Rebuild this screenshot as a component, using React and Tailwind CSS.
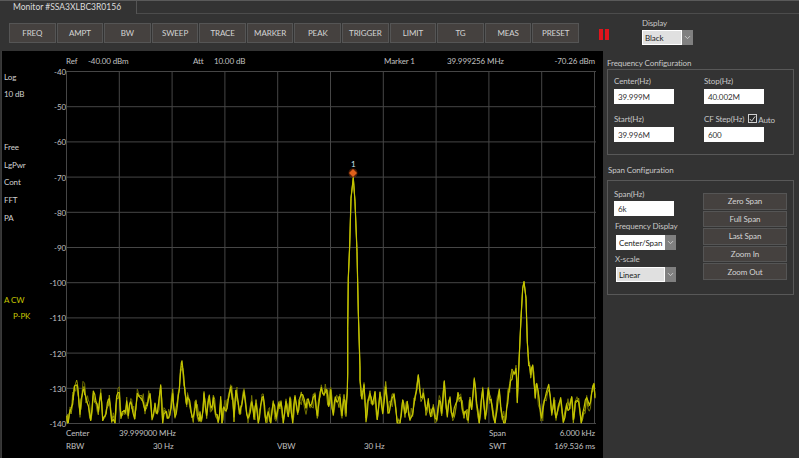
import React from "react";
import { ChevronDown } from "lucide-react";

const segs = [
  [60, 355, [20,190,25,205,30,165,36,155,40,125,44,90,50,85,55,115,60,175,66,120,72,95,76,125,80,130,85,150,92,190,100,110,108,135,115,175,122,115,128,190,135,180,142,150,148,130,155,200,165,205,170,125,178,110,183,190,190,170,196,175,200,140,205,180,212,135,218,165,224,190,232,115,245,125,255,165,262,150,270,120,276,190,285,150,292,180,302,95,308,200,316,170,322,190,330,180,338,110,345,180,352,150,358,110,364,30,368,35,375,110,380,145,385,125,392,160,400,190,408,145,416,190]],
  [200, 355, [0,180,6,190,12,115,20,185,28,125,34,165,40,125,48,180,55,205,62,130,66,200,72,150,78,160,85,130,92,100,98,125,102,190,108,100,114,140,120,175,125,150,132,115,140,170,148,180,155,135,162,190,168,145,175,200,182,150,190,125,197,195,205,170,212,200,220,140,228,195,236,150,243,145,250,205,258,145,265,180,270,125,278,205,285,118,293,170,300,135,308,125,318,165,325,130,335,150,345,125,352,185,358,130,364,95,372,120,380,110,386,150,392,110,400,180,406,130,414,145]],
  [340, 355, [0,130,6,180,12,125,18,175,22,110,23,60]],
  [335, 165, [38,490,40,340,44,240,48,100,55,38,60,110,66,260,70,440,75,610]],
  [340, 355, [60,80,65,125,72,85,78,195,85,130,90,115,97,150,105,110,112,190,120,110,128,170,137,90,144,175,152,140,162,125,172,205,180,205,188,130,195,180,202,145,210,190,218,175,225,125,235,60,243,130,250,115,258,170,265,135,272,180,280,155,290,200,298,130,305,180,313,85,322,180,330,130,338,185,348,150,354,120,362,125,372,185,378,165,385,195]],
  [470, 275, [0,370,5,400,13,318,20,385,28,445,38,345,46,430,55,345,63,380,75,445,88,340,97,430,105,445,110,400,116,350,122,310,130,295,138,285,142,375,148,240,153,130,158,40,162,20,168,70,172,200,176,265,182,305,188,265,196,360,200,330,210,400,215,435,222,385,236,335,245,420,252,375,258,425,272,365,280,440,290,385,298,400,305,360,310,440,316,378,326,380,334,445,342,405,350,370,358,395,365,360,372,335,375,365]],
];

const base = [];
segs.forEach(([ox, oy, a]) => {
  for (let i = 0; i < a.length; i += 2) base.push([ox + a[i] / 3 - 66, oy + a[i + 1] / 3 - 71]);
});
const toStr = (l) => l.map(([x, y]) => `${x.toFixed(1)},${y.toFixed(1)}`).join(" ");
let seed = 7;
const rnd = () => ((seed = (seed * 16807) % 2147483647) / 2147483647);
const clampY = (y) => Math.min(352, y);
// thicken the noise floor: insert jittered midpoints between the traced points
const dense = (amp) => {
  const out = [];
  base.forEach((p, i) => {
    const n = base[i + 1];
    out.push([p[0], clampY(p[1] + (p[1] > 290 ? (rnd() - 0.5) * amp * 0.5 : 0))]);
    if (n && p[1] > 285 && n[1] > 285 && n[0] - p[0] > 1) {
      out.push([(p[0] + n[0]) / 2, clampY((p[1] + n[1]) / 2 + (rnd() - 0.5) * amp)]);
    }
  });
  return out;
};
const lineA = dense(10);
const lineB = dense(14);
const lineC = dense(20);

const menu = ["FREQ", "AMPT", "BW", "SWEEP", "TRACE", "MARKER", "PEAK", "TRIGGER", "LIMIT", "TG", "MEAS", "PRESET"];
const levels = ["-40", "-50", "-60", "-70", "-80", "-90", "-100", "-110", "-120", "-130", "-140"];
const font = { fontFamily: 'Lato, "Liberation Sans", Arial, sans-serif' };

function Btn({ children, className = "" }) {
  return (
    <div className={`flex items-center justify-center bg-[#45413f] border border-[#555555] text-[#d4d4d4] ${className}`}>
      {children}
    </div>
  );
}
function Field({ label, value, extra }) {
  return (
    <div className="flex flex-col">
      <div className="h-[16px] flex items-center gap-[4px] text-[#c8c8c8] whitespace-nowrap">
        <span>{label}</span>
        {extra}
      </div>
      <div className="w-[60px] h-[15px] bg-white text-[#333] pl-[4px] flex items-center">{value}</div>
    </div>
  );
}
function Dropdown({ value, width = "w-[60px]", sel = "bg-white" }) {
  return (
    <div className={`${width} h-[15px] bg-white flex items-stretch text-[#222]`}>
      <div className={`flex-1 m-[1px] pl-[2px] flex items-center whitespace-nowrap overflow-hidden ${sel}`}>{value}</div>
      <div className="w-[11px] bg-[#808080] flex items-center justify-center">
        <ChevronDown size={9} color="#e0e0e0" />
      </div>
    </div>
  );
}

export default function App() {
  return (
    <div className="w-[799px] h-[458px] bg-[#333333] flex flex-col overflow-hidden text-[8px] tracking-[-0.1px] leading-none text-[#d0d0d0]" style={font}>
      {/* tab strip */}
      <div className="h-[14px] flex border-t border-[#5a5a5a]">
        <div className="w-[137px] border-r border-[#555] pl-[13px] flex items-center text-[8.5px] tracking-normal text-[#dcdcdc] whitespace-nowrap">
          Monitor #SSA3XLBC3R0156
        </div>
        <div className="flex-1 border-b border-[#4c4c4c]" />
      </div>

      {/* toolbar */}
      <div className="h-[37px] flex pl-[9px] pt-[9px]">
        <div className="w-[570px] h-[20px] grid grid-cols-12 gap-px">
          {menu.map((m) => (
            <Btn key={m}>{m}</Btn>
          ))}
        </div>
        <div className="ml-[20px] mt-[6px] h-[11px] flex gap-[2px]">
          <div className="w-[4px] bg-[#e0141c]" />
          <div className="w-[4px] bg-[#e0141c]" />
        </div>
        <div className="ml-[33px] -mt-[5px] flex flex-col gap-[3px]">
          <div className="h-[9px] flex items-center text-[#c8c8c8]">Display</div>
          <Dropdown value="Black" width="w-[51px]" sel="bg-[#e0e0e0]" />
        </div>
      </div>

      <div className="flex-1 flex min-h-0">
        {/* chart */}
        <div className="ml-px w-[602px] bg-black border-l border-[#3a3a3a] flex flex-col text-[#c0c0c0]">
          <div className="h-[20px] pl-[64px] pr-[8px] flex items-center whitespace-nowrap">
            <div className="w-[22px]">Ref</div>
            <div className="w-[105px]">-40.00 dBm</div>
            <div className="w-[21px]">Att</div>
            <div className="w-[170px]">10.00 dB</div>
            <div className="w-[63px]">Marker 1</div>
            <div>39.999256 MHz</div>
            <div className="ml-auto">-70.26 dBm</div>
          </div>

          <div className="flex h-[353px]">
            <div className="w-[43px] pl-[2px] flex flex-col -mt-[3px] text-[#d0d0d0]">
              {["Log", "10 dB", "", "", "Free", "LgPwr", "Cont", "FFT", "PA"].map((t, i) => (
                <div key={i} className="h-[17.6px] flex items-center">{t}</div>
              ))}
              <div className="mt-[65px] h-[17px] flex items-center text-[#c8c800]">A CW</div>
              <div className="h-[16px] pl-[9px] flex items-center text-[#c8c800]">P-PK</div>
            </div>
            <div className="w-[21px] -mt-[16.5px] flex flex-col items-end text-[#c0c0c0]">
              {levels.map((l) => (
                <div key={l} className="h-[35.2px] flex items-center shrink-0">{l}</div>
              ))}
            </div>
            <div className="relative w-[530px] h-[353px]">
              <svg width="530" height="353" viewBox="0 0 530 353" className="block">
                {[0,1,2,3,4,5,6,7,8,9,10].map((i) => (
                  <g key={i} stroke="#464646" strokeWidth="1">
                    <line x1={0.5 + i * 52.8} y1="0" x2={0.5 + i * 52.8} y2="353" />
                    <line x1="0" y1={0.5 + i * 35.2} x2="530" y2={0.5 + i * 35.2} />
                  </g>
                ))}
                <polyline points={toStr(lineC)} fill="none" stroke="#6f6f00" strokeWidth="1" />
                <polyline points={toStr(lineB)} fill="none" stroke="#9a9a00" strokeWidth="1" />
                <polyline points={toStr(lineA)} fill="none" stroke="#c4c400" strokeWidth="1.2" strokeLinejoin="round" />
                <circle cx="287" cy="102" r="4.5" fill="#8a3208" opacity="0.55" />
                <path d="M287 98 L291 102 L287 106 L283 102 Z" fill="#e0601a" />
              </svg>
              <div className="absolute left-[285px] top-[89px] text-[8px] text-[#cfe4f0]">1</div>
            </div>
          </div>

          <div className="pl-[64px] pt-[2px] grid grid-cols-[53px_34px_124px_87px_125px_30px_76px] auto-rows-[13px] items-center whitespace-nowrap">
            <div>Center</div>
            <div className="col-span-4">39.999000 MHz</div>
            <div>Span</div>
            <div className="text-right">6.000 kHz</div>
            <div className="col-span-2">RBW</div>
            <div>30 Hz</div>
            <div>VBW</div>
            <div>30 Hz</div>
            <div>SWT</div>
            <div className="text-right">169.536 ms</div>
          </div>
        </div>

        {/* right panel */}
        <div className="flex-1 pl-[4px] flex flex-col text-[#c8c8c8]">
          <div className="h-[18px] pt-[5px] flex items-center whitespace-nowrap">Frequency Configuration</div>
          <div className="w-[187px] h-[86px] border border-[#585858] pl-[6px] pt-[3px] grid grid-cols-[90px_auto] auto-rows-[38px]">
            <Field label="Center(Hz)" value="39.999M" />
            <Field label="Stop(Hz)" value="40.002M" />
            <Field label="Start(Hz)" value="39.996M" />
            <Field
              label="CF Step(Hz)"
              value="600"
              extra={
                <span className="flex items-center gap-[1px] -mt-[1px]">
                  <span className="w-[9px] h-[9px] border border-[#d0d0d0] bg-[#2a2a2a] flex items-center justify-center">
                    <svg width="8" height="8" viewBox="0 0 8 8"><path d="M1 4 L3 6.5 L7 1" fill="none" stroke="#e8e8e8" strokeWidth="1" /></svg>
                  </span>
                  <span className="mt-[2px]">Auto</span>
                </span>
              }
            />
          </div>
          <div className="h-[25px] pt-[5px] pl-px flex items-center whitespace-nowrap">Span Configuration</div>
          <div className="w-[187px] h-[115px] border border-[#585858] pl-[6px] pt-[6px] flex">
            <div className="w-[89px] flex flex-col">
              <div className="h-[13px] flex items-center">Span(Hz)</div>
              <div className="w-[60px] h-[15px] bg-white text-[#333] pl-[4px] flex items-center mt-px">6k</div>
              <div className="h-[18px] mt-[1px] pl-px flex items-center whitespace-nowrap">Frequency Display</div>
              <div className="pl-[2px]"><Dropdown value="Center/Span" /></div>
              <div className="h-[17px] pl-px flex items-center">X-scale</div>
              <div className="pl-[2px]"><Dropdown value="Linear" sel="bg-[#e0e0e0]" /></div>
            </div>
            <div className="w-[84px] mt-[6px] flex flex-col gap-px">
              {["Zero Span", "Full Span", "Last Span", "Zoom In", "Zoom Out"].map((b) => (
                <Btn key={b} className="h-[16.6px]">{b}</Btn>
              ))}
            </div>
          </div>
        </div>
      </div>
    </div>
  );
}
